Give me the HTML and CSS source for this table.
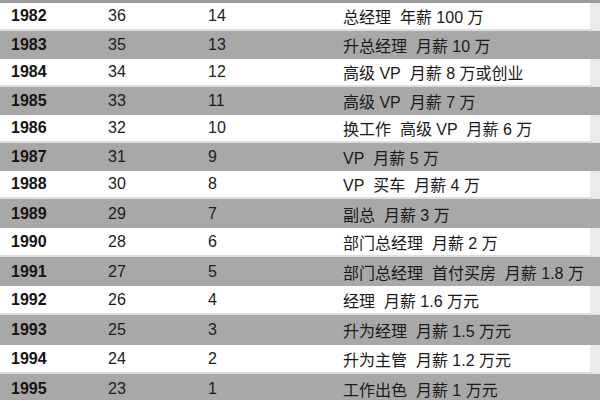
FILE: index.html
```html
<!DOCTYPE html>
<html lang="zh">
<head>
<meta charset="utf-8">
<title>表</title>
<link rel="stylesheet" href="styles.css">
</head>
<body>
<div class="table">
  <div class="strip"></div>
  <div class="row light"><span class="year">1982</span><span>36</span><span>14</span><span class="note">总经理&nbsp; 年薪 100 万</span></div>
  <div class="row dark"><span class="year">1983</span><span>35</span><span>13</span><span class="note">升总经理&nbsp; 月薪 10 万</span></div>
  <div class="row light"><span class="year">1984</span><span>34</span><span>12</span><span class="note">高级 VP&nbsp; 月薪 8 万或创业</span></div>
  <div class="row dark"><span class="year">1985</span><span>33</span><span>11</span><span class="note">高级 VP&nbsp; 月薪 7 万</span></div>
  <div class="row light"><span class="year">1986</span><span>32</span><span>10</span><span class="note">换工作&nbsp; 高级 VP&nbsp; 月薪 6 万</span></div>
  <div class="row dark"><span class="year">1987</span><span>31</span><span>9</span><span class="note">VP&nbsp; 月薪 5 万</span></div>
  <div class="row light"><span class="year">1988</span><span>30</span><span>8</span><span class="note">VP&nbsp; 买车&nbsp; 月薪 4 万</span></div>
  <div class="row dark tall"><span class="year">1989</span><span>29</span><span>7</span><span class="note">副总&nbsp; 月薪 3 万</span></div>
  <div class="row light tall"><span class="year">1990</span><span>28</span><span>6</span><span class="note">部门总经理&nbsp; 月薪 2 万</span></div>
  <div class="row dark tall"><span class="year">1991</span><span>27</span><span>5</span><span class="note">部门总经理&nbsp; 首付买房&nbsp; 月薪 1.8 万</span></div>
  <div class="row light tall"><span class="year">1992</span><span>26</span><span>4</span><span class="note">经理&nbsp; 月薪 1.6 万元</span></div>
  <div class="row dark taller"><span class="year">1993</span><span>25</span><span>3</span><span class="note">升为经理&nbsp; 月薪 1.5 万元</span></div>
  <div class="row light tall"><span class="year">1994</span><span>24</span><span>2</span><span class="note">升为主管&nbsp; 月薪 1.2 万元</span></div>
  <div class="row dark taller"><span class="year">1995</span><span>23</span><span>1</span><span class="note">工作出色&nbsp; 月薪 1 万元</span></div>
</div>
</body>
</html>
```
FILE: styles.css
```css
html, body {
  margin: 0;
  padding: 0;
  background: #ffffff;
}
body {
  width: 600px;
  height: 400px;
  overflow: hidden;
  font-family: "Liberation Sans", "Noto Sans CJK SC", sans-serif;
  color: #1c1c1c;
}
.table {
  display: flex;
  flex-direction: column;
}
.strip {
  height: 3px;
  background: #9c9c9c;
}
.row {
  display: grid;
  grid-template-columns: 97px 100px 135px 1fr;
  align-items: center;
  height: 28px;
  padding-left: 11px;
  font-size: 16px;
  box-sizing: border-box;
}
.row.tall { height: 29px; }
.row.taller { height: 30px; }
.row.light {
  background: #ffffff;
  border-right: 10px solid #ebebeb;
  border-bottom: 2px solid #dedede;
}
.row.dark {
  background: #a8a8a8;
}
.year {
  font-weight: bold;
  color: #141414;
}
.note {
  font-size: 16px;
  color: #1a1a1a;
  white-space: nowrap;
}
```
